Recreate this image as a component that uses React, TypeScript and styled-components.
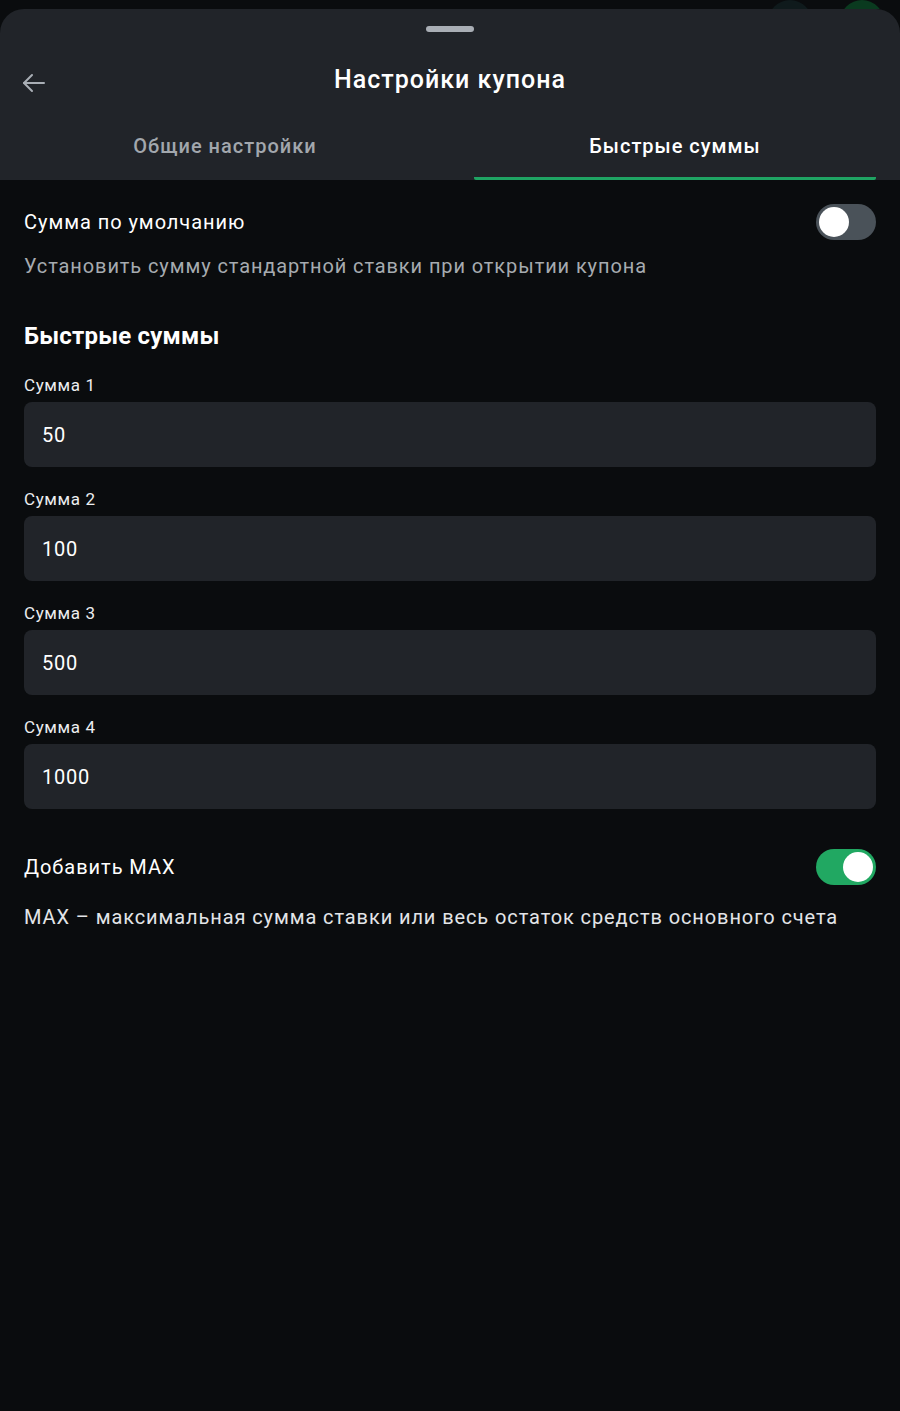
import styled, { createGlobalStyle } from 'styled-components';

const GlobalStyle = createGlobalStyle`
  html, body {
    margin: 0;
    padding: 0;
    background: #0a0c0e;
    font-family: Roboto, "Noto Sans", sans-serif;
  }
  * { box-sizing: border-box; }
`;

const amounts = [
  { label: 'Сумма 1', value: '50' },
  { label: 'Сумма 2', value: '100' },
  { label: 'Сумма 3', value: '500' },
  { label: 'Сумма 4', value: '1000' },
];

const Toggle = ({ on }: { on: boolean }) => (
  <ToggleTrack $on={on}>
    <ToggleKnob $on={on} />
  </ToggleTrack>
);

export default function App() {
  return (
    <Page>
      <GlobalStyle />
      <Backdrop>
        <Bubble $color="#0f1a1c" />
        <Bubble $color="#0a3a1f" />
      </Backdrop>

      <Sheet>
        <Handle />
        <Header>
          <BackButton aria-label="Назад">
            <svg width="24" height="20" viewBox="0 0 24 20" fill="none" stroke="#a9aeb5" strokeWidth="2" strokeLinecap="round" strokeLinejoin="round">
              <path d="M22 10H2" />
              <path d="M10 2L2 10l8 8" />
            </svg>
          </BackButton>
          <Title>Настройки купона</Title>
        </Header>
        <Tabs>
          <Tab>Общие настройки</Tab>
          <Tab $active>Быстрые суммы</Tab>
        </Tabs>
      </Sheet>

      <Content>
        <SwitchRow>
          <RowTitle>Сумма по умолчанию</RowTitle>
          <Toggle on={false} />
        </SwitchRow>
        <Hint>Установить сумму стандартной ставки при открытии купона</Hint>

        <SectionTitle>Быстрые суммы</SectionTitle>
        <Fields>
          {amounts.map(a => (
            <Field key={a.label}>
              <FieldLabel>{a.label}</FieldLabel>
              <AmountInput defaultValue={a.value} />
            </Field>
          ))}
        </Fields>

        <SwitchRow $spaced>
          <RowTitle>Добавить MAX</RowTitle>
          <Toggle on />
        </SwitchRow>
        <Hint $light>MAX – максимальная сумма ставки или весь остаток средств основного счета</Hint>
      </Content>
    </Page>
  );
}

const Page = styled.div`
  min-height: 1411px;
  background: #0a0c0e;
  color: #ffffff;
`;

const Backdrop = styled.div`
  height: 9px;
  overflow: hidden;
  display: flex;
  justify-content: flex-end;
  gap: 28px;
  padding-right: 16px;
`;

const Bubble = styled.div<{ $color: string }>`
  width: 44px;
  height: 44px;
  border-radius: 50%;
  background: ${p => p.$color};
`;

const Sheet = styled.div`
  background: #212429;
  border-radius: 24px 24px 0 0;
  padding-top: 17px;
`;

const Handle = styled.div`
  width: 48px;
  height: 6px;
  border-radius: 3px;
  background: #a9aeb5;
  margin: 0 auto;
`;

const Header = styled.div`
  height: 96px;
  display: flex;
  align-items: center;
  justify-content: center;
  position: relative;
`;

const BackButton = styled.button`
  position: absolute;
  left: 22px;
  top: 41px;
  background: none;
  border: 0;
  padding: 0;
  display: flex;
  cursor: pointer;
`;

const Title = styled.h1`
  margin: 0;
  font-size: 25px;
  font-weight: 500;
  letter-spacing: 1px;
  color: #ffffff;
  line-height: 32px;
`;

const Tabs = styled.div`
  display: grid;
  grid-template-columns: 1fr 1fr;
  gap: 48px;
  padding: 0 24px;
`;

const Tab = styled.div<{ $active?: boolean }>`
  height: 52px;
  padding: 3px 0 19px;
  line-height: 30px;
  text-align: center;
  font-size: 20px;
  font-weight: 500;
  letter-spacing: 1px;
  color: ${p => (p.$active ? '#ffffff' : '#a2a7ad')};
  border-bottom: 3px solid ${p => (p.$active ? '#1fa463' : 'transparent')};
  border-radius: 0 0 2px 2px;
`;

const Content = styled.div`
  padding: 24px;
  display: flex;
  flex-direction: column;
`;

const SwitchRow = styled.div<{ $spaced?: boolean }>`
  display: flex;
  align-items: center;
  justify-content: space-between;
  height: 36px;
  margin-top: ${p => (p.$spaced ? '40px' : '0')};
`;

const RowTitle = styled.span`
  font-size: 20px;
  letter-spacing: 0.95px;
  color: #ffffff;
`;

const ToggleTrack = styled.div<{ $on: boolean }>`
  width: 60px;
  height: 36px;
  border-radius: 18px;
  padding: 3px;
  display: flex;
  justify-content: ${p => (p.$on ? 'flex-end' : 'flex-start')};
  background: ${p => (p.$on ? '#21a862' : '#4a5259')};
`;

const ToggleKnob = styled.div<{ $on: boolean }>`
  width: 30px;
  height: 30px;
  border-radius: 50%;
  background: #ffffff;
`;

const Hint = styled.p<{ $light?: boolean }>`
  margin: ${p => (p.$light ? '18px' : '12px')} 0 0;
  font-size: 20px;
  line-height: 28px;
  letter-spacing: 0.9px;
  color: ${p => (p.$light ? '#e3e5e8' : '#a6abb0')};
`;

const SectionTitle = styled.h2`
  margin: 40px 0 0;
  font-size: 24px;
  line-height: 32px;
  font-weight: 700;
  letter-spacing: 0.2px;
  color: #ffffff;
`;

const Fields = styled.div`
  margin-top: 21px;
  display: flex;
  flex-direction: column;
  gap: 20px;
`;

const Field = styled.label`
  display: flex;
  flex-direction: column;
  gap: 5px;
`;

const FieldLabel = styled.span`
  font-size: 17px;
  line-height: 24px;
  letter-spacing: 0.6px;
  color: #eceef0;
`;

const AmountInput = styled.input`
  height: 65px;
  border: 0;
  border-radius: 8px;
  background: #212429;
  padding: 0 18px;
  font-family: Roboto, "Noto Sans", sans-serif;
  font-size: 20px;
  letter-spacing: 0.8px;
  color: #ffffff;
  outline: none;
`;
